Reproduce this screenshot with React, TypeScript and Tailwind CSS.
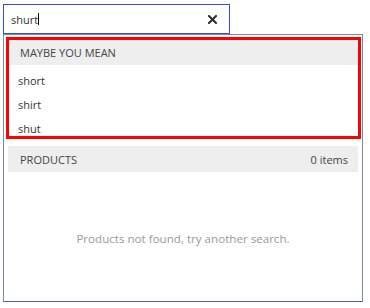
import React from 'react';

const suggestions = ['short', 'shirt', 'shut'];

const App: React.FC = () => {
  return (
    <div className="min-h-[308px] bg-white pl-[3px] pt-[4px] font-['Open_Sans',sans-serif] text-[11px] text-[#333]">
      {/* search box */}
      <div className="flex h-[30px] w-[227px] items-center border border-[#3f4cbc] pl-[7px] pr-[12px]">
        <div className="flex flex-1 items-center">
          <span className="leading-[15px]">shurt</span>
          <span className="inline-block h-[12px] w-px bg-black" />
        </div>
        <svg width="9" height="9" viewBox="0 0 9 9" className="text-[#2b2b2b]">
          <path d="M1 1 L8 8 M8 1 L1 8" stroke="currentColor" strokeWidth="2" strokeLinecap="square" />
        </svg>
      </div>

      {/* dropdown panel */}
      <div className="flex h-[268px] w-[360px] flex-col border border-[#7c89a8] border-b-[#55608f]">
        <div className="ml-[2px] mt-[2px] h-[102px] w-[355px] overflow-hidden border-[3px] border-[#ff0000]">
          <div className="h-[25px] bg-[#eeeeee] pl-[11px] leading-[25px] text-[#444]">MAYBE YOU MEAN</div>
          <ul className="pt-[4px]">
            {suggestions.map((s) => (
              <li key={s} className="h-[24px] pl-[9px] leading-[24px] text-[#333]">
                {s}
              </li>
            ))}
          </ul>
        </div>

        <div className="mx-[4px] mt-[7px] flex h-[26px] items-center justify-between bg-[#eeeeee] pl-[12px] pr-[10px] pt-[2px] text-[#444]">
          <span>PRODUCTS</span>
          <span>0 items</span>
        </div>

        <p className="mt-[59px] text-center text-[11.6px] leading-[15px] text-[#999]">Products not found, try another search.</p>
      </div>
    </div>
  );
};

export default App;
